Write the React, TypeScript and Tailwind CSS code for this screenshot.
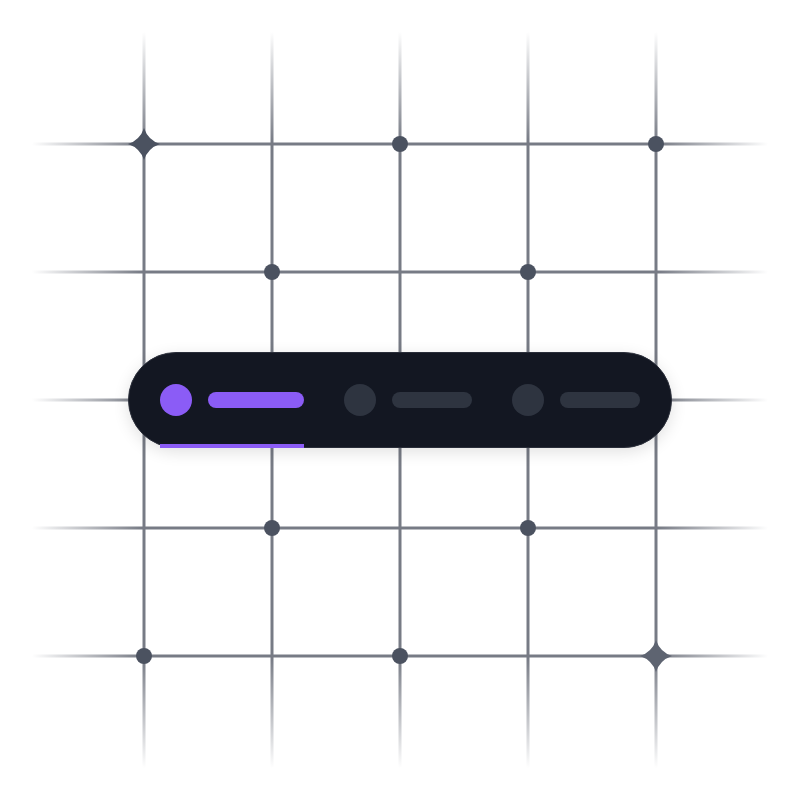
const LINES = [144, 272, 400, 528, 656];

const DOTS: [number, number][] = [
  [400, 144], [656, 144],
  [272, 272], [528, 272],
  [272, 528], [528, 528],
  [144, 656], [400, 656],
];

function Sparkle({ x, y, fill }: { x: number; y: number; fill: string }) {
  return (
    <path
      transform={`translate(${x} ${y})`}
      d="M0 -16 Q4 -4 16 0 Q4 4 0 16 Q-4 4 -16 0 Q-4 -4 0 -16Z"
      fill={fill}
    />
  );
}

function GridBackdrop() {
  return (
    <svg className="absolute inset-0" width="800" height="800" viewBox="0 0 800 800">
      <defs>
        <linearGradient id="fadeH" x1="32" y1="0" x2="768" y2="0" gradientUnits="userSpaceOnUse">
          <stop offset="0" stopColor="#777b85" stopOpacity="0" />
          <stop offset="0.15" stopColor="#777b85" stopOpacity="1" />
          <stop offset="0.85" stopColor="#777b85" stopOpacity="1" />
          <stop offset="1" stopColor="#777b85" stopOpacity="0" />
        </linearGradient>
        <linearGradient id="fadeV" x1="0" y1="32" x2="0" y2="768" gradientUnits="userSpaceOnUse">
          <stop offset="0" stopColor="#777b85" stopOpacity="0" />
          <stop offset="0.15" stopColor="#777b85" stopOpacity="1" />
          <stop offset="0.85" stopColor="#777b85" stopOpacity="1" />
          <stop offset="1" stopColor="#777b85" stopOpacity="0" />
        </linearGradient>
      </defs>
      {LINES.map((p) => (
        <rect key={`h${p}`} x="32" y={p - 1.5} width="736" height="3" fill="url(#fadeH)" />
      ))}
      {LINES.map((p) => (
        <rect key={`v${p}`} x={p - 1.5} y="32" width="3" height="736" fill="url(#fadeV)" />
      ))}
      {DOTS.map(([x, y]) => (
        <circle key={`${x}-${y}`} cx={x} cy={y} r="8" fill="#4b5260" />
      ))}
      <Sparkle x={144} y={144} fill="#4b5260" />
      <Sparkle x={656} y={656} fill="#5e6471" />
    </svg>
  );
}

function Step({ active, barW }: { active?: boolean; barW: string }) {
  return (
    <div className="flex items-center gap-4">
      <div className={`w-8 h-8 rounded-full ${active ? 'bg-[#8b5cf6]' : 'bg-[#2e3440]'}`} />
      <div className={`h-4 rounded-full ${barW} ${active ? 'bg-[#8b5cf6]' : 'bg-[#2e3440]'}`} />
    </div>
  );
}

export default function App() {
  return (
    <div className="relative w-[800px] h-[800px] bg-white overflow-hidden">
      <GridBackdrop />
      <div className="relative w-full h-full flex items-center justify-center">
        <div className="relative w-[544px] h-24 rounded-full bg-[#131722] border border-[#2a2e3a] shadow-[0_4px_16px_rgba(0,0,0,0.12)] flex items-center gap-10 px-[31px]">
          <Step active barW="w-24" />
          <Step barW="w-20" />
          <Step barW="w-20" />
          <div className="absolute left-[31px] -bottom-px w-36 h-1 bg-[#8b5cf6]" />
        </div>
      </div>
    </div>
  );
}
